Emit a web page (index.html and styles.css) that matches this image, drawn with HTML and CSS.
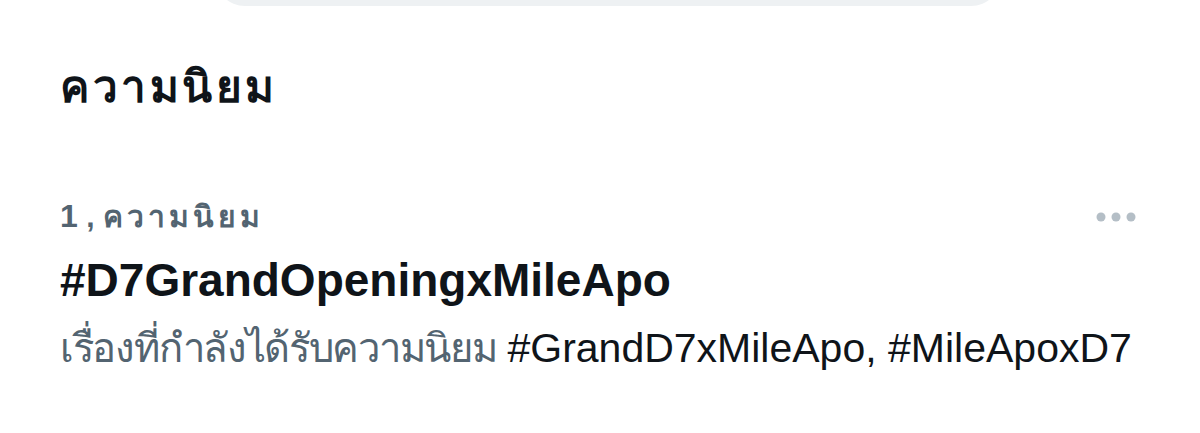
FILE: index.html
```html
<!doctype html>
<html>
<head>
    <meta charset="utf-8">
    <title>ความนิยม</title>
    <link rel="stylesheet" href="styles.css">
</head>
<body>
    <div class="search"></div>
    <h2 class="title">ความนิยม</h2>
    <div class="trend">
        <div class="trend-head">
            <span class="meta"><b>1</b> , <span class="th">ความนิยม</span></span>
            <svg class="more" width="40" height="10" viewBox="0 0 40 10">
                <circle cx="5" cy="5" r="4.5" fill="#b4bec6"/>
                <circle cx="20" cy="5" r="4.5" fill="#b4bec6"/>
                <circle cx="35" cy="5" r="4.5" fill="#b4bec6"/>
            </svg>
        </div>
        <div class="tag">#D7GrandOpeningxMileApo</div>
        <div class="with"><span class="th">เรื่องที่กำลังได้รับความนิยม</span> <span class="dark">#GrandD7xMileApo, #MileApoxD7</span></div>
    </div>
</body>
</html>
```
FILE: styles.css
```css
body {
    margin: 0;
    background: #fff;
    font-family: "Liberation Sans", "Noto Sans", sans-serif;
    color: #0f1419;
    overflow: hidden;
}

.search {
    height: 60px;
    margin: -54px 0 0 215px;
    width: 786px;
    background: #eef1f3;
    border-radius: 30px;
}

.title {
    margin: 53px 0 0 60px;
    font-size: 44px;
    font-weight: 700;
    line-height: 56px;
    letter-spacing: 3.5px;
}

.trend {
    padding: 0 60px;
    margin-top: 81px;
}

.trend-head {
    display: flex;
    justify-content: space-between;
    align-items: center;
}

.meta {
    font-size: 30px;
    color: #536471;
    font-weight: 700;
    line-height: 40px;
}

.meta b {
    font-size: 32px;
}

.meta .th {
    letter-spacing: 4px;
}

.more {
    margin-right: 4px;
}

.tag {
    margin-top: 17px;
    font-size: 46px;
    font-weight: 700;
    line-height: 52px;
}

.with {
    margin-top: 18px;
    font-size: 40px;
    color: #536471;
    line-height: 48px;
}

.with .th {
    letter-spacing: -1.3px;
}

.dark {
    color: #0f1419;
    font-size: 41px;
}
```
